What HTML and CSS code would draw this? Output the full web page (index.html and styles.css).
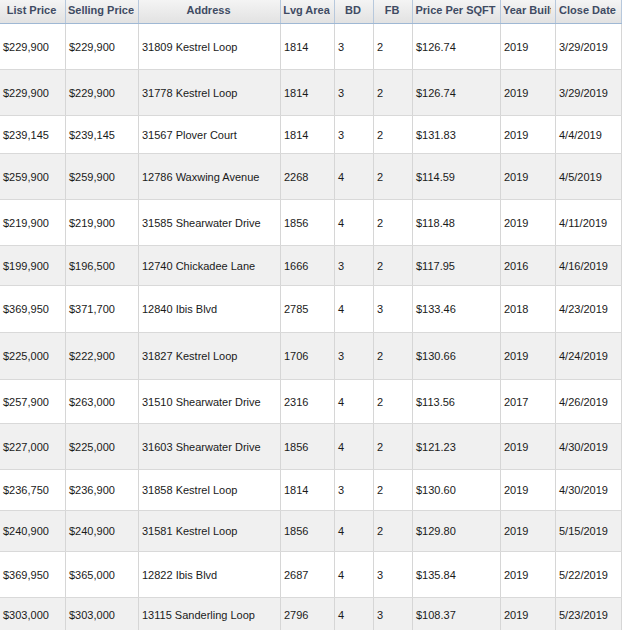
FILE: index.html
```html
<!DOCTYPE html>
<html>
<head>
<meta charset="utf-8">
<link rel="stylesheet" href="styles.css">
</head>
<body>
<div class="grid">
  <div class="row head">
    <div class="hc"><span>List Price</span></div><div class="hc"><span>Selling Price</span></div><div class="hc"><span>Address</span></div><div class="hc"><span>Lvg Area</span></div><div class="hc"><span>BD</span></div><div class="hc"><span>FB</span></div><div class="hc"><span>Price Per SQFT</span></div><div class="hc"><span>Year Built</span></div><div class="hc"><span>Close Date</span></div>
  </div>
  <div class="row h46"><div class="c">$229,900</div><div class="c">$229,900</div><div class="c">31809 Kestrel Loop</div><div class="c">1814</div><div class="c">3</div><div class="c">2</div><div class="c">$126.74</div><div class="c">2019</div><div class="c">3/29/2019</div></div>
  <div class="row alt h46"><div class="c">$229,900</div><div class="c">$229,900</div><div class="c">31778 Kestrel Loop</div><div class="c">1814</div><div class="c">3</div><div class="c">2</div><div class="c">$126.74</div><div class="c">2019</div><div class="c">3/29/2019</div></div>
  <div class="row h38"><div class="c">$239,145</div><div class="c">$239,145</div><div class="c">31567 Plover Court</div><div class="c">1814</div><div class="c">3</div><div class="c">2</div><div class="c">$131.83</div><div class="c">2019</div><div class="c">4/4/2019</div></div>
  <div class="row alt h46"><div class="c">$259,900</div><div class="c">$259,900</div><div class="c">12786 Waxwing Avenue</div><div class="c">2268</div><div class="c">4</div><div class="c">2</div><div class="c">$114.59</div><div class="c">2019</div><div class="c">4/5/2019</div></div>
  <div class="row h46"><div class="c">$219,900</div><div class="c">$219,900</div><div class="c">31585 Shearwater Drive</div><div class="c">1856</div><div class="c">4</div><div class="c">2</div><div class="c">$118.48</div><div class="c">2019</div><div class="c">4/11/2019</div></div>
  <div class="row alt h40"><div class="c">$199,900</div><div class="c">$196,500</div><div class="c">12740 Chickadee Lane</div><div class="c">1666</div><div class="c">3</div><div class="c">2</div><div class="c">$117.95</div><div class="c">2016</div><div class="c">4/16/2019</div></div>
  <div class="row h47"><div class="c">$369,950</div><div class="c">$371,700</div><div class="c">12840 Ibis Blvd</div><div class="c">2785</div><div class="c">4</div><div class="c">3</div><div class="c">$133.46</div><div class="c">2018</div><div class="c">4/23/2019</div></div>
  <div class="row alt h47"><div class="c">$225,000</div><div class="c">$222,900</div><div class="c">31827 Kestrel Loop</div><div class="c">1706</div><div class="c">3</div><div class="c">2</div><div class="c">$130.66</div><div class="c">2019</div><div class="c">4/24/2019</div></div>
  <div class="row h44"><div class="c">$257,900</div><div class="c">$263,000</div><div class="c">31510 Shearwater Drive</div><div class="c">2316</div><div class="c">4</div><div class="c">2</div><div class="c">$113.56</div><div class="c">2017</div><div class="c">4/26/2019</div></div>
  <div class="row alt h46"><div class="c">$227,000</div><div class="c">$225,000</div><div class="c">31603 Shearwater Drive</div><div class="c">1856</div><div class="c">4</div><div class="c">2</div><div class="c">$121.23</div><div class="c">2019</div><div class="c">4/30/2019</div></div>
  <div class="row h41"><div class="c">$236,750</div><div class="c">$236,900</div><div class="c">31858 Kestrel Loop</div><div class="c">1814</div><div class="c">3</div><div class="c">2</div><div class="c">$130.60</div><div class="c">2019</div><div class="c">4/30/2019</div></div>
  <div class="row alt h41"><div class="c">$240,900</div><div class="c">$240,900</div><div class="c">31581 Kestrel Loop</div><div class="c">1856</div><div class="c">4</div><div class="c">2</div><div class="c">$129.80</div><div class="c">2019</div><div class="c">5/15/2019</div></div>
  <div class="row h46"><div class="c">$369,950</div><div class="c">$365,000</div><div class="c">12822 Ibis Blvd</div><div class="c">2687</div><div class="c">4</div><div class="c">3</div><div class="c">$135.84</div><div class="c">2019</div><div class="c">5/22/2019</div></div>
  <div class="row alt h35"><div class="c">$303,000</div><div class="c">$303,000</div><div class="c">13115 Sanderling Loop</div><div class="c">2796</div><div class="c">4</div><div class="c">3</div><div class="c">$108.37</div><div class="c">2019</div><div class="c">5/23/2019</div></div>
</div>
</body>
</html>
```
FILE: styles.css
```css
html, body {
  margin: 0;
  padding: 0;
  background: #ffffff;
}
body {
  font-family: "Liberation Sans", Arial, sans-serif;
  font-size: 11px;
  color: #1a1a1a;
  overflow: hidden;
}
.grid {
  width: 622px;
}
.row {
  display: grid;
  grid-template-columns: 66px 73px 142px 54px 39px 39px 88px 55px 66px;
  box-sizing: border-box;
  border-bottom: 1px solid #d9d9d9;
}
.row.alt {
  background: #f0f0f0;
}
.c {
  border-right: 1px solid #d6d6d6;
  display: flex;
  align-items: center;
  padding-left: 3px;
  white-space: nowrap;
  overflow: hidden;
}
.head {
  height: 24px;
  background: linear-gradient(#f4f4f4, #e2e2e2);
  border-bottom: 1px solid #9fb8d4;
}
.hc {
  border-right: 1px solid #b7c8dc;
  font-weight: bold;
  color: #3f4b63;
  text-align: center;
  line-height: 21px;
  white-space: nowrap;
  overflow: hidden;
  padding: 0 4px 0 2px;
  font-size: 11px;
}
.hc span {
  display: block;
  overflow: hidden;
}
.h35 { height: 35px; }
.h38 { height: 38px; }
.h40 { height: 40px; }
.h41 { height: 41px; }
.h44 { height: 44px; }
.h46 { height: 46px; }
.h47 { height: 47px; }
```
